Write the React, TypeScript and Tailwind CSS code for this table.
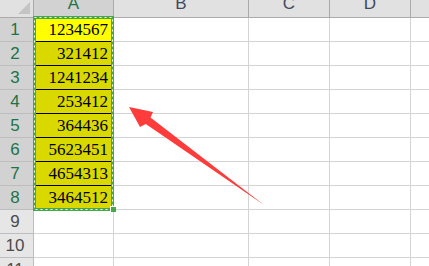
import React from "react";

// values copied into column A (rows 1-8)
const values = ["1234567", "321412", "1241234", "253412", "364436", "5623451", "4654313", "3464512"];
const rowCount = 11;

const numFont = { fontFamily: '"Liberation Serif", "Times New Roman", serif' };
const headFont = { fontFamily: '"Liberation Sans", Arial, sans-serif' };

const ColHead = ({ label, w, active }: { label: string; w: string; active?: boolean }) => (
  <div
    className={`${w} h-[18px] shrink-0 overflow-hidden border-r border-b border-[#ababab] flex justify-center items-start ${
      active ? "bg-[#d2d2d2] text-[#217346]" : "bg-[#e1e1e1] text-[#3f4a5e]"
    }`}
  >
    <span className="text-[17px] leading-none -mt-[5px]" style={headFont}>
      {label}
    </span>
  </div>
);

const Row = ({ n }: { n: number }) => {
  const value = values[n - 1];
  const selected = value !== undefined;
  return (
    <div className="flex h-[24px]">
      {/* row number */}
      <div
        className={`w-[34px] shrink-0 border-r border-b border-[#bdbdbd] flex items-end justify-center pr-[3px] pb-[3px] ${
          selected ? "bg-[#d2d2d2] text-[#217346]" : "bg-[#e6e6e6] text-[#4b4b4b]"
        }`}
      >
        <span className="text-[17px] leading-none" style={headFont}>
          {n}
        </span>
      </div>
      {/* column A */}
      <div
        className={`w-[80px] shrink-0 border-r border-b flex items-end justify-end pr-[5px] pb-[3px] ${
          selected ? "border-black" : "border-[#d4d4d4]"
        } ${n === 1 ? "bg-[#ffff00]" : selected ? "bg-[#d9d900]" : "bg-white"}`}
      >
        {selected && (
          <span className="text-[17px] leading-none text-black" style={numFont}>
            {value}
          </span>
        )}
      </div>
      <div className="w-[135px] shrink-0 border-r border-b border-[#d4d4d4]" />
      <div className="w-[81px] shrink-0 border-r border-b border-[#d4d4d4]" />
      <div className="w-[81px] shrink-0 border-r border-b border-[#d4d4d4]" />
      <div className="flex-1 border-b border-[#d4d4d4]" />
    </div>
  );
};

export default function App() {
  return (
    <div className="relative w-[429px] h-[266px] overflow-hidden bg-white">
      {/* column headers */}
      <div className="flex">
        <div className="w-[34px] h-[18px] shrink-0 bg-[#e1e1e1] border-r border-b border-[#ababab] relative">
          <svg className="absolute inset-0" width="33" height="17">
            <polygon points="30,2 30,14 18,14" fill="#c4c4c4" />
          </svg>
        </div>
        <ColHead label="A" w="w-[80px]" active />
        <ColHead label="B" w="w-[135px]" />
        <ColHead label="C" w="w-[81px]" />
        <ColHead label="D" w="w-[81px]" />
        <div className="flex-1 h-[18px] bg-[#e1e1e1] border-b border-[#ababab]" />
      </div>

      {Array.from({ length: rowCount }, (_, i) => (
        <Row key={i} n={i + 1} />
      ))}

      {/* copy marquee around A1:A8 */}
      <svg className="absolute left-[33px] top-[16px] pointer-events-none" width="82" height="196">
        <rect x="1.5" y="1.5" width="78" height="192" fill="none" stroke="#46a846" strokeWidth="3" />
        <rect
          x="1.5"
          y="1.5"
          width="78"
          height="192"
          fill="none"
          stroke="#ffffff"
          strokeWidth="1"
          strokeDasharray="2 3"
        />
      </svg>
      {/* fill handle */}
      <div className="absolute left-[110px] top-[206px] w-[6px] h-[6px] bg-[#46a846] border-l border-t border-white" />

      {/* red pointer arrow */}
      <svg className="absolute inset-0 pointer-events-none" width="429" height="266">
        <polygon
          points="129,107 153,112 150.5,117.5 264,205 145.8,123.9 140,127"
          fill="#ff3b3b"
        />
      </svg>
    </div>
  );
}
